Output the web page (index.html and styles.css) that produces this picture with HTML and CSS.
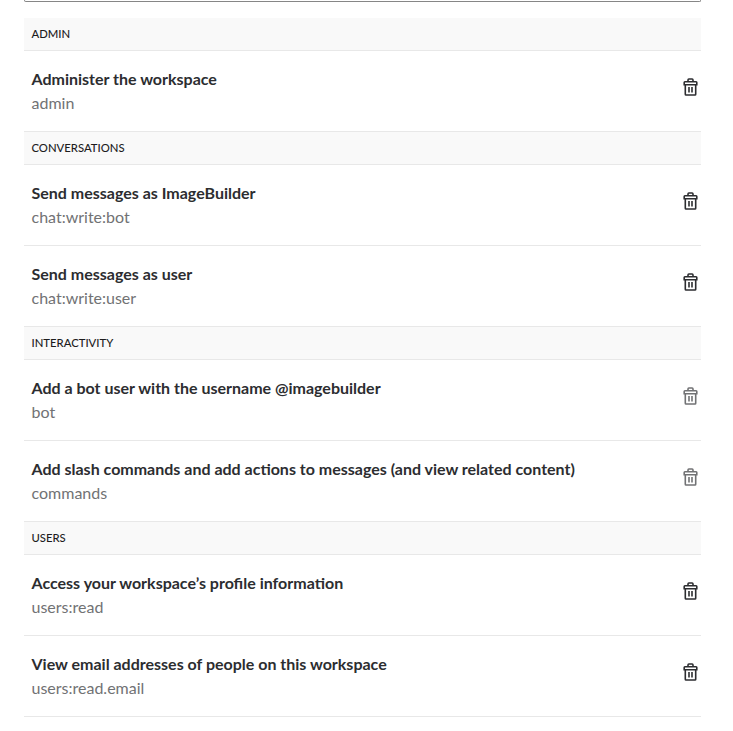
FILE: index.html
```html
<!DOCTYPE html>
<html lang="en"><head><meta charset="utf-8"><title>Permission scopes</title><link rel="stylesheet" href="styles.css"></head>
<body>
<svg class="defs"><symbol id="trash" viewBox="0 0 16 20"><path d="M5 4.500V2.900Q5 2 5.900 2H9.100Q10 2 10 2.900V4.500M1.900 4.800H13.100Q13.800 4.800 13.800 5.500V7.700H1.200V5.500Q1.200 4.800 1.900 4.800ZM2.300 7.700V17.300Q2.300 18 3 18H12Q12.700 18 12.700 17.300V7.700M6 10V15.500M9 10V15.500"/></symbol></svg>
<main class="scopes">
<div class="select"></div>
<h2>ADMIN</h2>
<div class="row"><div><h3>Administer the workspace</h3><p>admin</p></div><svg class="icon"><use href="#trash"/></svg></div>
<h2>CONVERSATIONS</h2>
<div class="row"><div><h3>Send messages as ImageBuilder</h3><p>chat:write:bot</p></div><svg class="icon"><use href="#trash"/></svg></div>
<div class="row"><div><h3>Send messages as user</h3><p>chat:write:user</p></div><svg class="icon"><use href="#trash"/></svg></div>
<h2>INTERACTIVITY</h2>
<div class="row"><div><h3>Add a bot user with the username @imagebuilder</h3><p>bot</p></div><svg class="icon muted"><use href="#trash"/></svg></div>
<div class="row"><div><h3>Add slash commands and add actions to messages (and view related content)</h3><p>commands</p></div><svg class="icon muted"><use href="#trash"/></svg></div>
<h2>USERS</h2>
<div class="row"><div><h3>Access your workspace’s profile information</h3><p>users:read</p></div><svg class="icon"><use href="#trash"/></svg></div>
<div class="row"><div><h3>View email addresses of people on this workspace</h3><p>users:read.email</p></div><svg class="icon"><use href="#trash"/></svg></div>
</main>
</body></html>
```
FILE: styles.css
```css
* { box-sizing: border-box; margin: 0; }
body { background: #fff; font-family: Lato, sans-serif; color: #2c2d30; }
.defs { display: none; }
.scopes { width: 677px; margin-left: 24px; }
.select { height: 2px; margin-bottom: 16px; border: 1px solid #868686; border-top: 0; border-radius: 0 0 4px 4px; }
h2 { height: 33px; padding-left: 7.5px; background: #f9f9f9; border-bottom: 1px solid #e8e8e8; font-size: 11.3px; font-weight: 500; line-height: 32px; color: #1d1c1d; }
.row { display: flex; justify-content: space-between; height: 81px; padding: 16px 2px 0 7.5px; border-bottom: 1px solid #e8e8e8; }
h3 { font-size: 16px; font-weight: 700; line-height: 24px; }
p { font-size: 16px; line-height: 24px; color: #717274; }
.icon { width: 16px; height: 20px; margin-top: 10px; fill: none; stroke: #2c2d30; stroke-width: 1.6; }
.muted { stroke: #717274; }
```
